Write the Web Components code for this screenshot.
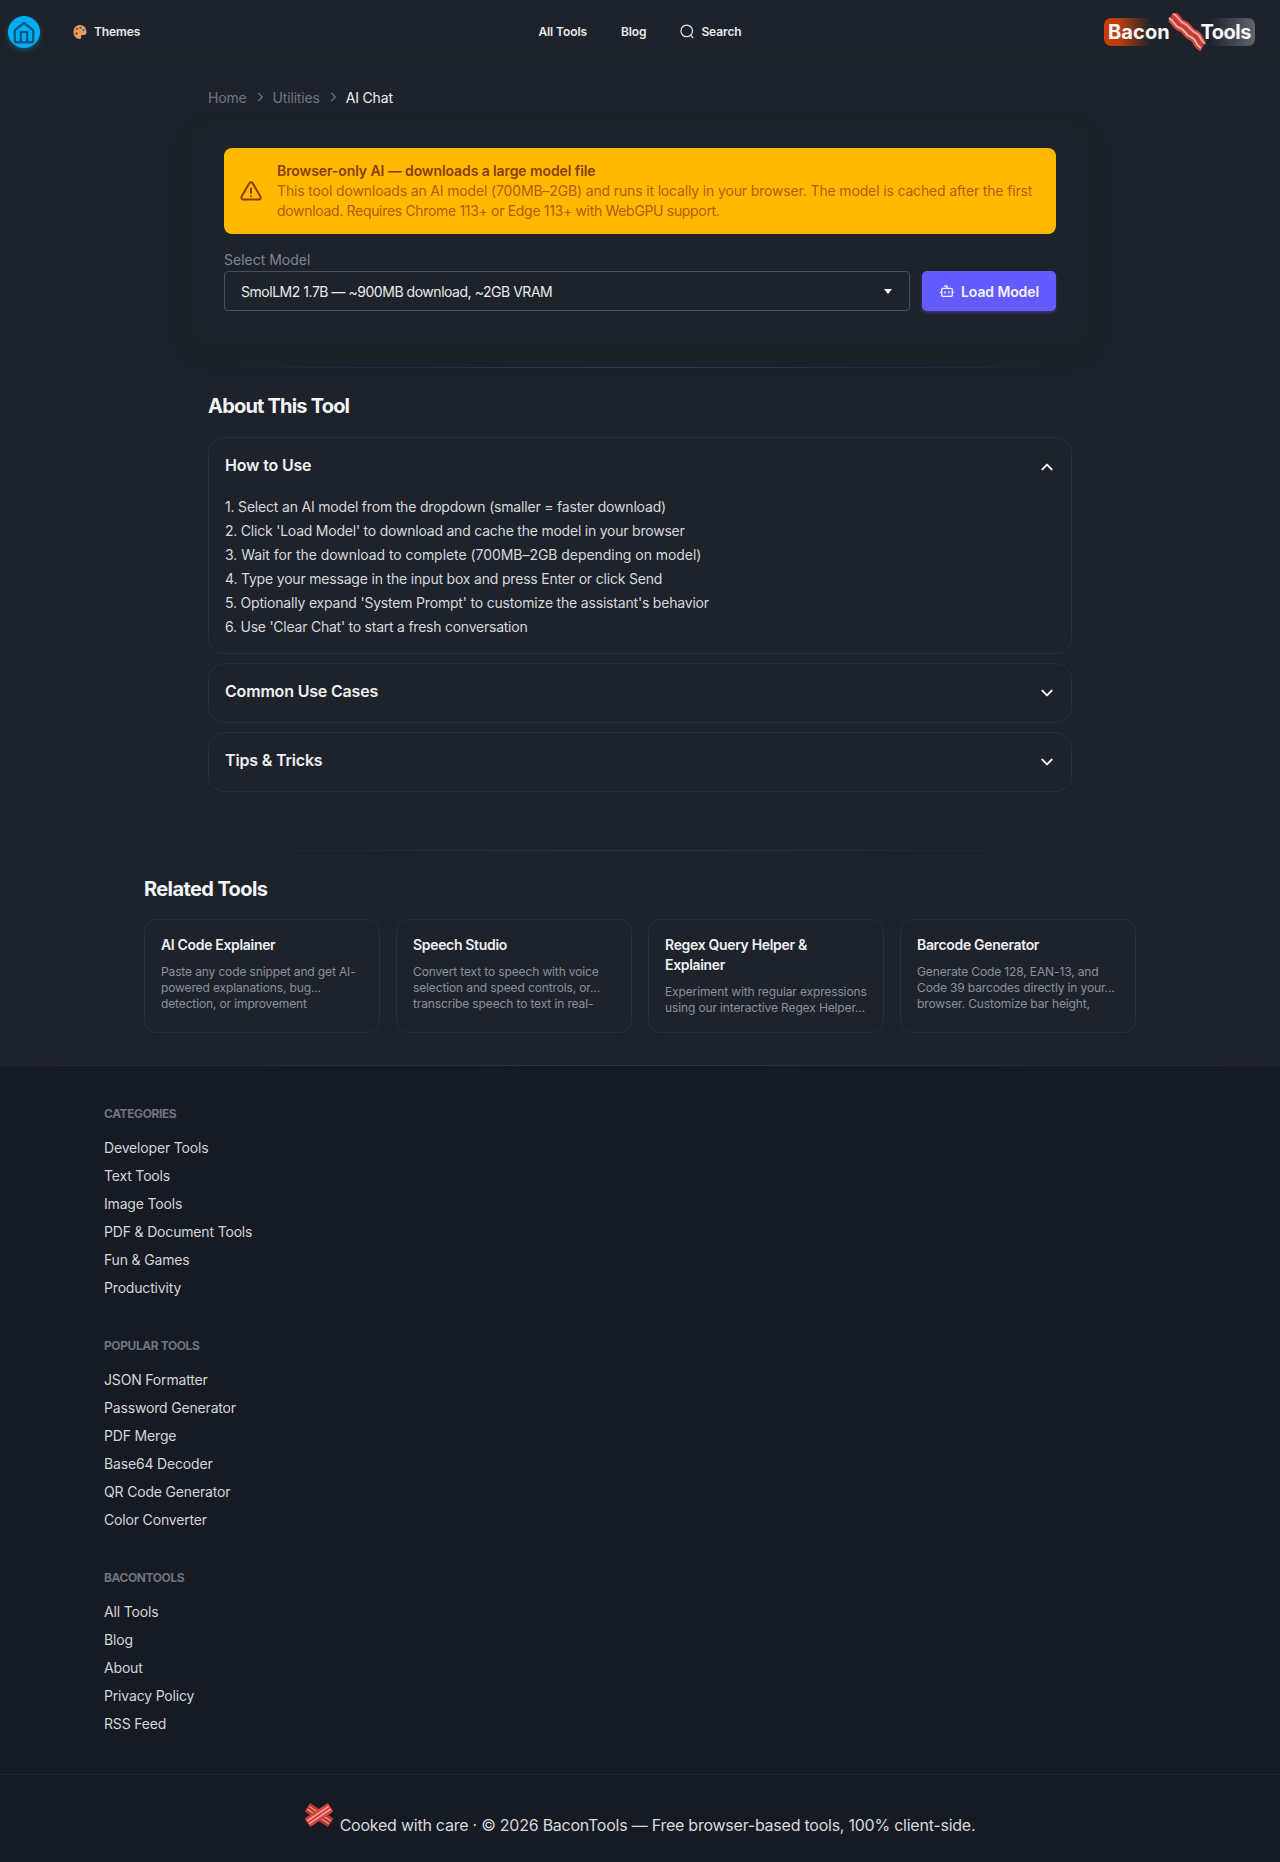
<!DOCTYPE html>
<html lang="en"><head><meta charset="utf-8"><title>AI Chat</title>
<style>
html,body{margin:0;padding:0;background:#1e232b;color:#e5e7eb;font-family:Inter,"Liberation Sans",sans-serif;}
</style></head><body>
<site-nav></site-nav>
<page-main>
  <bread-crumb></bread-crumb>
  <tool-panel></tool-panel>
  <fade-rule></fade-rule>
  <section-title>About This Tool</section-title>
  <acc-item label="How to Use" open>
    <div>1. Select an AI model from the dropdown (smaller = faster download)</div>
    <div style="letter-spacing:-.22px">2. Click 'Load Model' to download and cache the model in your browser</div>
    <div style="letter-spacing:-.05px">3. Wait for the download to complete (700MB–2GB depending on model)</div>
    <div>4. Type your message in the input box and press Enter or click Send</div>
    <div>5. Optionally expand 'System Prompt' to customize the assistant's behavior</div>
    <div style="letter-spacing:-.24px">6. Use 'Clear Chat' to start a fresh conversation</div>
  </acc-item>
  <acc-item label="Common Use Cases"></acc-item>
  <acc-item label="Tips &amp; Tricks"></acc-item>
</page-main>
<related-tools>
  <tool-card name="AI Code Explainer">Paste any code snippet and get AI-<br>powered explanations, bug...<br>detection, or improvement</tool-card>
  <tool-card name="Speech Studio">Convert text to speech with voice<br>selection and speed controls, or...<br>transcribe speech to text in real-</tool-card>
  <tool-card name="Regex Query Helper &amp; Explainer">Experiment with regular expressions<br>using our interactive Regex Helper...</tool-card>
  <tool-card name="Barcode Generator">Generate Code 128, EAN-13, and<br>Code 39 barcodes directly in your...<br>browser. Customize bar height,</tool-card>
</related-tools>
<site-footer>
  <foot-col heading="CATEGORIES"><a>Developer Tools</a><a>Text Tools</a><a>Image Tools</a><a>PDF &amp; Document Tools</a><a>Fun &amp; Games</a><a>Productivity</a></foot-col>
  <foot-col heading="POPULAR TOOLS"><a>JSON Formatter</a><a>Password Generator</a><a>PDF Merge</a><a>Base64 Decoder</a><a>QR Code Generator</a><a>Color Converter</a></foot-col>
  <foot-col heading="BACONTOOLS"><a>All Tools</a><a>Blog</a><a>About</a><a>Privacy Policy</a><a>RSS Feed</a></foot-col>
</site-footer>
<script>
function def(name, html){
  customElements.define(name, class extends HTMLElement{
    connectedCallback(){
      if(this.shadowRoot) return;
      const r=this.attachShadow({mode:'open'});
      r.innerHTML=typeof html==='function'?html(this):html;
    }
  });
}
const WAVE="M4 3C10 6 9 11 15 13S20 20 26 22S30 30 36 33";
def('site-nav',`<style>
:host{display:grid;grid-template-columns:1fr auto 1fr;align-items:center;height:63px;background:#1e232b;box-shadow:0 1px 0 #1b2027;font-size:12px;font-weight:600;letter-spacing:-.1px;color:#e8eaee;position:relative}
.l{display:flex;align-items:center;padding-left:8px}
.home{width:32px;height:32px;border-radius:50%;background:#00aeef;box-shadow:0 2px 5px rgba(0,174,239,.35);display:flex;align-items:center;justify-content:center}
.th{display:flex;align-items:center;gap:7px;margin-left:33px}
.c{display:flex;align-items:center;gap:34px}
.s{display:flex;align-items:center;gap:7px}
.r{display:flex;justify-content:flex-end;padding-right:25px}
.logo{position:relative;width:151px;height:28px;border-radius:7px;background:linear-gradient(90deg,#cf3d00 0,#b8400f 10%,rgba(184,64,15,0) 31%,rgba(90,95,106,0) 70%,#5f6470 100%);display:flex;justify-content:space-between;align-items:center;padding:0 4px;box-sizing:border-box;font-size:20px;font-weight:700;color:#f7f7f8}
.logo svg{position:absolute;left:63px;top:-5px}
</style>
<div class="l"><span class="home"><svg width="26" height="26" viewBox="0 0 24 24" fill="none" stroke="#0a5287" stroke-width="2" stroke-linejoin="round"><path d="M3.500 10.500 12 3.500l8.500 7V20a1.500 1.500 0 0 1-1.500 1.500H5A1.500 1.500 0 0 1 3.500 20z"/><path d="M9 21.500V12h6v9.500"/></svg></span>
<span class="th"><svg width="14" height="16" viewBox="0 0 14 16"><path d="M7 1C3 1 .5 4 .5 8s2.500 7 6 7c1.500 0 2-1 1.500-2-.4-1 .2-2 1.300-2h1.700c1.500 0 2.500-1 2.500-3C13.500 4 11 1 7 1z" fill="#e3a15c"/><circle cx="4" cy="5" r="1.300" fill="#c4472f"/><circle cx="7.500" cy="3.800" r="1.200" fill="#3f7d4e"/><circle cx="10.500" cy="6" r="1.200" fill="#3a6db0"/><circle cx="3.500" cy="9.500" r="1.300" fill="#7c4a2b"/></svg><span>Themes</span></span></div>
<div class="c"><span>All Tools</span><span>Blog</span><span class="s"><svg width="14" height="15" viewBox="0 0 14 15" fill="none" stroke="#e8eaee" stroke-width="1.200"><circle cx="6.700" cy="6.900" r="5.800"/><path d="M10.800 11.200l2.400 2.900"/></svg><span>Search</span></span></div>
<div class="r"><div class="logo"><span style="letter-spacing:.1px">Bacon</span><svg width="40" height="38" viewBox="0 0 40 38" fill="none" stroke-linecap="butt"><path d="${WAVE}" stroke="#d2484a" stroke-width="12"/><path d="${WAVE}" stroke="#f4b5a0" stroke-width="1.500" transform="translate(2.500 -2.200)"/><path d="${WAVE}" stroke="#f6c3a5" stroke-width="1.500" transform="translate(-2.200 2)"/><path d="${WAVE}" stroke="#b83538" stroke-width="1.500"/></svg><span style="letter-spacing:-.5px">Tools</span></div></div>`);
def('page-main',`<style>:host{display:block;width:864px;margin:0 auto;padding-top:24px}</style><slot></slot>`);
def('bread-crumb',`<style>:host{display:flex;align-items:center;height:20px;font-size:14px;letter-spacing:-.17px;color:#6e7582}
svg{margin:0 6px}.cur{color:#eef0f3}</style><span>Home</span><svg width="14" height="14" viewBox="0 0 24 24" fill="none" stroke="#6e7582" stroke-width="2"><path d="m9 5 7 7-7 7"/></svg><span>Utilities</span><svg width="14" height="14" viewBox="0 0 24 24" fill="none" stroke="#6e7582" stroke-width="2"><path d="m9 5 7 7-7 7"/></svg><span class="cur">AI Chat</span>`);
def('tool-panel',`<style>
:host{display:block;margin:18px -16px 0;padding:23px 32px 32px;border-radius:16px;box-shadow:0 8px 28px rgba(0,0,0,.12)}
.warn{display:flex;align-items:center;gap:14px;background:#ffb900;border-radius:8px;padding:13px 16px 13px 15px;font-size:14px;line-height:20px;color:#b25c05;letter-spacing:-.15px;white-space:nowrap}
.warn b{display:block;font-weight:600;color:#8a3d06;letter-spacing:-.1px}
.l2{letter-spacing:-.32px}
label{display:block;margin-top:16px;height:20px;line-height:20px;font-size:14px;color:#7f8795}
.row{display:flex;gap:12px;margin-top:1px}
.sel{flex:1;height:40px;box-sizing:border-box;border:1px solid #4a4f59;border-radius:4px;display:flex;align-items:center;justify-content:space-between;padding:0 17px 0 16px;font-size:14px;letter-spacing:-.47px;color:#e8eaee}
.caret{width:0;height:0;border:4.500px solid transparent;border-top:5px solid #fff;border-bottom:0}
.btn{width:134px;height:40px;background:#635bff;border-radius:5px;box-shadow:0 2px 3px rgba(99,91,255,.35);display:flex;align-items:center;justify-content:center;gap:6px;font-size:14px;font-weight:600;letter-spacing:-.1px;color:#f2f2ff}
</style>
<div class="warn"><svg width="24" height="24" viewBox="0 0 24 24" fill="none" stroke="#8a3d06" stroke-width="2" stroke-linecap="round" stroke-linejoin="round"><path d="M10.300 4.200 2.600 17.500A2 2 0 0 0 4.300 20.500h15.400a2 2 0 0 0 1.700-3L13.700 4.200a2 2 0 0 0-3.400 0z"/><path d="M12 9.500v4.500M12 17.200h.01"/></svg><div><b>Browser-only AI — downloads a large model file</b>This tool downloads an AI model (700MB–2GB) and runs it locally in your browser. The model is cached after the first<br><span class="l2">download. Requires Chrome 113+ or Edge 113+ with WebGPU support.</span></div></div>
<label>Select Model</label>
<div class="row"><div class="sel"><span>SmolLM2 1.7B — ~900MB download, ~2GB VRAM</span><i class="caret"></i></div>
<div class="btn"><svg width="16" height="16" viewBox="0 0 24 24" fill="none" stroke="#f2f2ff" stroke-width="2" stroke-linecap="round" stroke-linejoin="round"><path d="M12 8V4.500H8.500"/><rect x="4" y="8" width="16" height="12" rx="2"/><path d="M2 14h2M20 14h2M9 13v2M15 13v2"/></svg><span>Load Model</span></div></div>`);
def('fade-rule',`<style>:host{display:block;height:1px;margin:24px 0;background:linear-gradient(90deg,rgba(70,70,120,0),rgba(70,72,125,.55) 50%,rgba(70,70,120,0))}</style>`);
def('section-title',`<style>:host{display:block;height:28px;line-height:28px;font-size:20px;font-weight:700;letter-spacing:-.8px;color:#f3f5f8;margin-bottom:17px}</style><slot></slot>`);
def('acc-item',el=>{const o=el.hasAttribute('open');return `<style>
:host{display:block;border:1px solid #292e37;border-radius:16px;margin-bottom:9px;padding:0 16px;box-sizing:border-box;height:${o?217:60}px;color:#d6d9de}
.h{display:flex;align-items:center;justify-content:space-between;height:53px;font-size:16px;font-weight:600;color:#eef0f3;letter-spacing:-.18px}
svg{margin-top:4px}
.b{font-size:14px;line-height:24px;margin-top:4px;letter-spacing:-.19px}
</style><div class="h"><span>${el.getAttribute('label').replace('&','&amp;')}</span><svg width="16" height="16" viewBox="0 0 24 24" fill="none" stroke="#f3f5f8" stroke-width="3" stroke-linecap="round" stroke-linejoin="round"><path d="${o?'m5 15.500 7-7 7 7':'m5 8.500 7 7 7-7'}"/></svg></div>${o?'<div class="b"><slot></slot></div>':''}`});
def('related-tools',`<style>:host{display:block;width:992px;margin:0 auto;padding-bottom:32px}
.rule{height:1px;margin:58px 32px 24px;background:linear-gradient(90deg,rgba(70,70,120,0),rgba(70,72,125,.4) 50%,rgba(70,70,120,0))}
h2{margin:0 0 16px;height:28px;line-height:28px;font-size:20px;font-weight:700;letter-spacing:-.6px;color:#f3f5f8}
.g{display:grid;grid-template-columns:repeat(4,236px);gap:16px}</style><div class="rule"></div><h2>Related Tools</h2><div class="g"><slot></slot></div>`);
def('tool-card',el=>`<style>:host{display:block;height:114px;box-sizing:border-box;border:1px solid #292e37;border-radius:12px;padding:15px 16px;overflow:hidden}
h3{margin:0 0 9px;font-size:14px;line-height:20px;font-weight:600;letter-spacing:-.33px;color:#eef0f3}
div{font-size:12px;line-height:16px;color:#8b919c;white-space:nowrap;letter-spacing:-.13px}</style><h3>${el.getAttribute('name').replace('&','&amp;')}</h3><div><slot></slot></div>`);
def('site-footer',`<style>:host{display:block;background:#161a22;height:797px;box-sizing:border-box;padding-top:41px;position:relative}
:host::before{content:"";display:block;position:absolute;left:0;right:0;top:0;height:1px;background:linear-gradient(90deg,#22262f,#2c2e52 50%,#22262f)}
.cols{padding-left:104px;display:flex;flex-direction:column;gap:36px}
.line{height:1px;background:#21252d;margin-top:36px}
.copy{display:flex;justify-content:center;align-items:center;margin-top:36px;font-size:16px;letter-spacing:-.24px;color:#d6d9de;gap:7px;height:28px}
.copy svg{position:relative;top:-10px}</style>
<div class="cols"><slot></slot></div><div class="line"></div>
<div class="copy"><svg width="28" height="28" viewBox="0 0 28 28"><g transform="rotate(34 14 14)"><rect x="0" y="9" width="28" height="10" rx="1" fill="#b83a36"/><path d="M1 12.300h26M1 15.700h26" stroke="#ef8f84" stroke-width="1.300"/></g><g transform="rotate(-34 14 14)"><rect x="0" y="9" width="28" height="10" rx="1" fill="#d6423c"/><path d="M1 12.300h26M1 15.700h26" stroke="#f8b3a6" stroke-width="1.300"/></g></svg><span>Cooked with care · © 2026 BaconTools — Free browser-based tools, 100% client-side.</span></div>`);
def('foot-col',el=>`<style>:host{display:block}
h4{margin:0 0 12px;height:16px;line-height:16px;font-size:12px;font-weight:700;color:#6e7480;letter-spacing:-.42px}
::slotted(a){display:block;height:28px;line-height:28px;font-size:14px;letter-spacing:-.17px;color:#d3d6db}</style><h4>${el.getAttribute('heading')}</h4><slot></slot>`);
</script>
</body></html>
